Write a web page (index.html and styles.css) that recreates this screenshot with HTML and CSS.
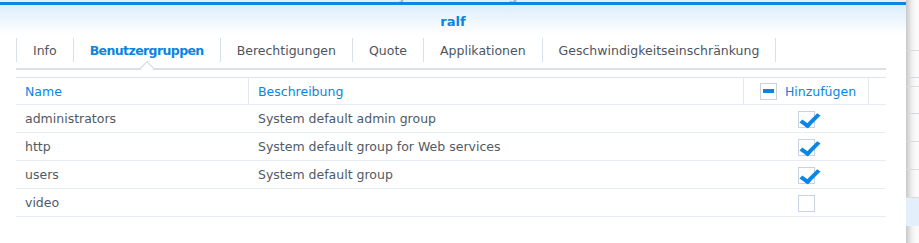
FILE: index.html
```html
<!DOCTYPE html>
<html lang="de">
<head>
    <meta charset="UTF-8">
    <title>ralf</title>
    <link rel="stylesheet" href="styles.css">
</head>
<body>
    <div class="desk">
        <div class="window">
            <!-- Titel des Fensters dahinter, fast verdeckt -->
            <div class="behind"><span>Systemsteuerung</span></div>
            <div class="win-head">ralf</div>

            <div class="tabs">
                <div class="tab">Info</div>
                <div class="tab active">Benutzergruppen<span class="notch"></span></div>
                <div class="tab">Berechtigungen</div>
                <div class="tab">Quote</div>
                <div class="tab">Applikationen</div>
                <div class="tab">Geschwindigkeitseinschränkung</div>
            </div>

            <div class="grid">
                <div class="row head">
                    <div class="cell c-name">Name</div>
                    <div class="cell c-desc">Beschreibung</div>
                    <div class="cell c-add"><span class="box minus"></span>Hinzufügen</div>
                    <div class="cell c-pad"></div>
                </div>
                <div class="row">
                    <div class="cell c-name">administrators</div>
                    <div class="cell c-desc">System default admin group</div>
                    <div class="cell c-add"><span class="box checked"></span></div>
                    <div class="cell c-pad"></div>
                </div>
                <div class="row">
                    <div class="cell c-name">http</div>
                    <div class="cell c-desc">System default group for Web services</div>
                    <div class="cell c-add"><span class="box checked"></span></div>
                    <div class="cell c-pad"></div>
                </div>
                <div class="row">
                    <div class="cell c-name">users</div>
                    <div class="cell c-desc">System default group</div>
                    <div class="cell c-add"><span class="box checked"></span></div>
                    <div class="cell c-pad"></div>
                </div>
                <div class="row">
                    <div class="cell c-name">video</div>
                    <div class="cell c-desc"></div>
                    <div class="cell c-add"><span class="box"></span></div>
                    <div class="cell c-pad"></div>
                </div>
            </div>
        </div>

        <!-- Fenster im Hintergrund -->
        <div class="side">
            <div class="s-top"></div>
            <div class="s-line s-gap9"></div>
            <div class="s-line blue s-gap27"></div>
            <div class="s-line s-gap9"></div>
            <div class="s-line blue s-gap27"></div>
            <div class="s-line s-row"></div>
            <div class="s-line s-row"></div>
            <div class="s-line s-row"></div>
            <div class="s-sel"></div>
        </div>
    </div>
</body>
</html>
```

FILE: styles.css
```css
body {
    margin: 0;
    padding: 0;
    background-color: #f7f7f7;
    font-family: 'DejaVu Sans', Verdana, sans-serif;
    font-size: 12.5px;
    color: #505a64;
}
.desk {
    display: flex;
    height: 243px;
    overflow: hidden;
}
.window {
    width: 906px;
    flex: none;
    background-color: #fff;
}
.behind {
    height: 2px;
    overflow: hidden;
    background-color: #ececec;
    text-align: center;
}
.behind span {
    display: block;
    margin-top: -11px;
    font-size: 13px;
    line-height: 13px;
    color: #b0b0b0;
    font-weight: bold;
}
.win-head {
    border-top: 3px solid #0a86e6;
    height: 28px;
    padding-top: 2px;
    line-height: 30px;
    text-align: center;
    font-size: 13px;
    font-weight: bold;
    color: #0a84e2;
    background: linear-gradient(#dcedfc, #fff);
}
.tabs {
    display: flex;
    margin: 3px 20px 0 16px;
    padding-bottom: 6px;
    border-bottom: 2px solid #dcdfe3;
}
.tab {
    position: relative;
    height: 24px;
    line-height: 25px;
    padding: 0 16px;
    border-left: 1px solid #d7e1ea;
    color: #4c5560;
}
.tab:last-child {
    border-right: 1px solid #d7e1ea;
}
.tab.active {
    font-weight: bold;
    letter-spacing: -0.6px;
    color: #0a84e2;
}
.notch {
    position: absolute;
    left: 50%;
    bottom: -11px;
    width: 9px;
    height: 9px;
    margin-left: -5px;
    background-color: #fff;
    border-left: 1px solid #d4d8dc;
    border-top: 1px solid #d4d8dc;
    transform: rotate(45deg);
}
.grid {
    margin: 7px 20px 0 16px;
    border-top: 1px solid #dbe3ec;
}
.row {
    display: flex;
    height: 27px;
    border-bottom: 1px solid #e6ecf2;
}
.row.head {
    height: 26px;
}
.cell {
    display: flex;
    align-items: center;
    padding-left: 9px;
    box-sizing: border-box;
}
.c-name { width: 233px; }
.c-desc { width: 495px; }
.c-add {
    width: 125px;
    padding-left: 0;
    justify-content: center;
}
.c-pad { width: 17px; }
.head .cell {
    color: #0a84e2;
    border-right: 1px solid #e3e9ef;
}
.head .c-pad {
    border-right: none;
}
.head .c-add {
    padding-left: 4px;
}
.box {
    position: relative;
    width: 15px;
    height: 15px;
    border: 1px solid #c8d3df;
    background-color: #fff;
    margin-top: 1px;
}
.box.minus {
    margin-right: 8px;
    margin-top: 0;
}
.box.minus::after {
    content: "";
    position: absolute;
    left: 2px;
    top: 5px;
    width: 11px;
    height: 4px;
    background-color: #0a86e6;
}
.box.checked::after {
    content: "";
    position: absolute;
    left: 6px;
    top: -2px;
    width: 6px;
    height: 14px;
    border-right: 4px solid #0a86e6;
    border-bottom: 4px solid #0a86e6;
    transform: rotate(45deg) skewY(-10deg);
    transform-origin: 50% 50%;
}
.side {
    flex: 1;
    background: linear-gradient(to right, #c8c8c8, #f0f0f0 6px, #fafafa 10px);
    display: flex;
    flex-direction: column;
}
.s-top { height: 42px; }
.s-line { border-bottom: 1px solid #dcdcdc; }
.s-line.blue { border-bottom-color: #cfd8e2; }
.s-gap9 { height: 8px; }
.s-gap27 { height: 26px; }
.s-row { height: 27px; }
.s-sel {
    height: 28px;
    margin-top: 0;
    background-color: #e3effa;
}
```
